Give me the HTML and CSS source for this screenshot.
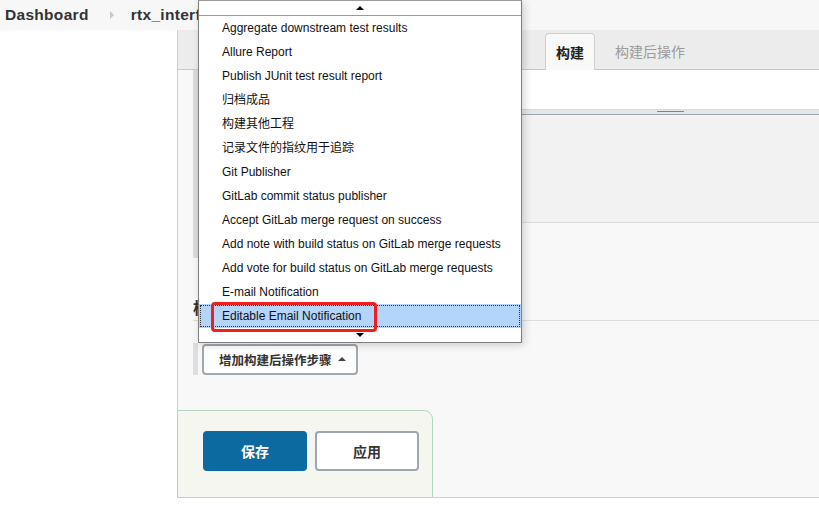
FILE: index.html
```html
<!DOCTYPE html>
<html lang="zh">
<head>
<meta charset="utf-8">
<title>rtx_interface - Config</title>
<link rel="stylesheet" href="styles.css">
</head>
<body>
<div class="crumbs">
  <span class="crumb">Dashboard</span>
  <span class="crumb-sep"></span>
  <span class="crumb">rtx_interface</span>
</div>
<div class="layout">
  <div class="side"></div>
  <div class="panel">
    <div class="tabbar">
      <div class="tab active">构建</div>
      <div class="tab">构建后操作</div>
    </div>
    <div class="content">
      <div class="section sec-build">
        <div class="editor"></div>
        <div class="splitter"><span class="grip"></span></div>
        <div class="editor-bottom"></div>
        <div class="after"></div>
      </div>
      <div class="heading">构建后操作</div>
      <div class="section sec-post">
        <button class="btn-add">增加构建后操作步骤 <span class="tri-up"></span></button>
      </div>
    </div>
    <div class="footer-row">
      <div class="bottom-bar">
        <button class="btn-save">保存</button>
        <button class="btn-apply">应用</button>
      </div>
      <div class="footer-rest"></div>
    </div>
  </div>
</div>

<div class="dropdown">
  <div class="scroll-up"><span class="arrow-up"></span></div>
  <ul class="items">
    <li>Aggregate downstream test results</li>
    <li>Allure Report</li>
    <li>Publish JUnit test result report</li>
    <li>归档成品</li>
    <li>构建其他工程</li>
    <li>记录文件的指纹用于追踪</li>
    <li>Git Publisher</li>
    <li>GitLab commit status publisher</li>
    <li>Accept GitLab merge request on success</li>
    <li>Add note with build status on GitLab merge requests</li>
    <li>Add vote for build status on GitLab merge requests</li>
    <li>E-mail Notification</li>
    <li class="selected">Editable Email Notification<span class="mark"></span></li>
  </ul>
  <div class="scroll-down"><span class="arrow-down"></span></div>
</div>
</body>
</html>
```
FILE: styles.css
```css
html, body {
  margin: 0;
  padding: 0;
  background: #fff;
  font-family: "Liberation Sans", "Noto Sans CJK SC", sans-serif;
  color: #333;
}
.crumbs {
  height: 30px;
  background: #f7f7f7;
  display: flex;
  align-items: center;
  padding-left: 5px;
  box-sizing: border-box;
}
.crumb {
  font-weight: bold;
  font-size: 15.5px;
  color: #333;
  letter-spacing: 0.3px;
}
.crumb-sep {
  width: 0;
  height: 0;
  border-left: 4px solid #c8c8c8;
  border-top: 4px solid transparent;
  border-bottom: 4px solid transparent;
  margin: 0 17px 0 21px;
}
.layout {
  display: flex;
  height: 482px;
}
.side {
  width: 177px;
  flex: none;
}
.panel {
  flex: 1;
  border-left: 1px solid #cfcfcf;
  display: flex;
  flex-direction: column;
  height: 468px;
  background: #f8f8f8;
}
.tabbar {
  height: 39px;
  background: #ececec;
  border-bottom: 1px solid #c8c8c8;
  display: flex;
  align-items: flex-end;
  padding-left: 367px;
}
.tab {
  font-family: "Noto Sans CJK SC", sans-serif;
  font-size: 14px;
  color: #9a9a9a;
  height: 36px;
  line-height: 36px;
  padding: 0 10px;
  box-sizing: border-box;
  margin-right: 10px;
}
.tab.active {
  background: #f9f9f9;
  border: 1px solid #cfcfcf;
  border-bottom: none;
  border-radius: 4px 4px 0 0;
  color: #222;
  font-weight: bold;
  height: 37px;
  line-height: 36px;
  margin-bottom: -1px;
}
.content {
  flex: 1;
  padding-left: 15px;
  display: flex;
  flex-direction: column;
}
.section {
  border-left: 5px solid #dcdcdc;
}
.sec-build {
  height: 188px;
  display: flex;
  flex-direction: column;
}
.editor {
  height: 40px;
  background: #fff;
}
.splitter {
  height: 6px;
  background: #e3e7ea;
  border-top: 1px solid #d6dadd;
  border-bottom: 1px solid #9aa6ae;
  box-sizing: border-box;
  display: flex;
  justify-content: flex-start;
  margin-top: -1px;
}
.grip {
  width: 27px;
  height: 3px;
  margin-top: 1px;
  border-top: 1px solid #80867f;
  border-bottom: 1px solid #80867f;
  margin-left: 459px;
}
.editor-bottom {
  height: 107px;
  background: #f2f2f2;
  border-bottom: 1px solid #dcdcdc;
}
.after {
  flex: 1;
  background: #f8f8f8;
}
.heading {
  margin-top: 40px;
  height: 22px;
  border-bottom: 1px solid #dcdcdc;
  font-family: "Noto Sans CJK SC", sans-serif;
  font-size: 16px;
  font-weight: bold;
  color: #333;
  line-height: 18px;
}
.sec-post {
  margin-top: 22px;
  height: 32px;
  display: flex;
  align-items: center;
  border-left-color: #dedede;
}
.btn-add {
  margin-left: 4px;
  height: 31px;
  width: 156px;
  background: #fff;
  border: 2px solid #a0a8b0;
  border-radius: 4px;
  font-family: "Noto Sans CJK SC", sans-serif;
  font-size: 12.5px;
  font-weight: bold;
  color: #333;
  padding: 0 0 0 15px;
  text-align: left;
  display: flex;
  align-items: center;
}
.tri-up {
  display: inline-block;
  width: 0;
  height: 0;
  border-left: 4px solid transparent;
  border-right: 4px solid transparent;
  border-bottom: 4px solid #444;
  margin-left: 6px;
}
.footer-row {
  margin-top: 35px;
  display: flex;
  height: 88px;
}
.bottom-bar {
  width: 256px;
  height: 88px;
  box-sizing: border-box;
  margin-left: -1px;
  background: #f5f6ef;
  border: 1px solid #b5d4be;
  border-radius: 0 9px 0 0;
  display: flex;
  align-items: flex-start;
  padding: 20px 0 0 25px;
  gap: 8px;
}
.bottom-bar button {
  width: 104px;
  height: 40px;
  border-radius: 4px;
  font-family: "Noto Sans CJK SC", sans-serif;
  font-size: 14px;
  font-weight: bold;
  cursor: pointer;
}
.btn-save {
  background: #0d6aa1;
  color: #fff;
  border: none;
}
.btn-apply {
  background: #fff;
  color: #333;
  border: 2px solid #9ea7b0;
}
.footer-rest {
  flex: 1;
  border-bottom: 1px solid #cfcfcf;
  box-sizing: border-box;
}
.dropdown {
  position: absolute;
  left: 198px;
  top: 0;
  width: 324px;
  height: 343px;
  box-sizing: border-box;
  border: 1px solid #7f7f7f;
  border-top-color: #9a9a9a;
  background: #fff;
  box-shadow: 2px 2px 8px rgba(0, 0, 0, 0.18);
  display: flex;
  flex-direction: column;
}
.scroll-up {
  height: 15px;
  border-bottom: 1px solid #9a9a9a;
  box-sizing: border-box;
  display: flex;
  justify-content: center;
  align-items: center;
}
.arrow-up {
  width: 0;
  height: 0;
  border-left: 4px solid transparent;
  border-right: 4px solid transparent;
  border-bottom: 4px solid #000;
}
.items {
  list-style: none;
  margin: 0;
  padding: 0;
}
.items li {
  height: 24px;
  line-height: 24px;
  padding-left: 23px;
  font-family: "Liberation Sans", "Noto Sans CJK SC", sans-serif;
  font-size: 12px;
  color: #111;
  position: relative;
  white-space: nowrap;
}
.items li.selected {
  background: #b3d4fb;
  outline: 1px dotted #333;
  outline-offset: -2px;
}
.mark {
  position: absolute;
  left: 12px;
  top: -2px;
  width: 160px;
  height: 24px;
  border: 3px solid #f21d1d;
  border-radius: 4px;
}
.scroll-down {
  flex: 1;
  display: flex;
  justify-content: center;
  align-items: center;
}
.arrow-down {
  width: 0;
  height: 0;
  border-left: 4px solid transparent;
  border-right: 4px solid transparent;
  border-top: 4px solid #000;
}
```
